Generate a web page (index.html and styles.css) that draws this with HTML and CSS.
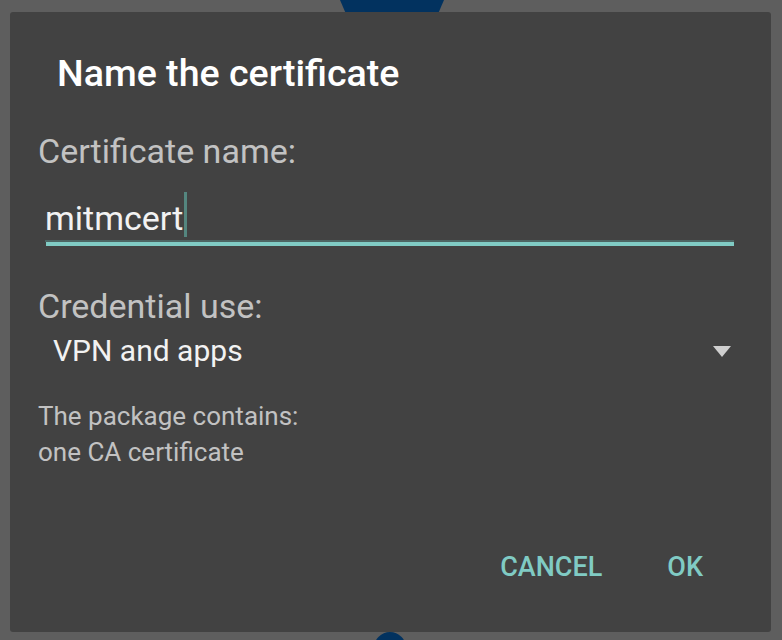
FILE: index.html
```html
<!DOCTYPE html>
<html>
<head>
<meta charset="utf-8">
<link rel="stylesheet" href="styles.css">
</head>
<body>
<div class="bg-tab"></div>
<div class="bg-dot"></div>
<div class="dialog">
  <div class="title">Name the certificate</div>
  <div class="label">Certificate name:</div>
  <div class="field">
    <div class="field-text">mitmcert<span class="cursor"></span></div>
  </div>
  <div class="label label-use">Credential use:</div>
  <div class="select">
    <span class="select-value">VPN and apps</span>
    <span class="caret"></span>
  </div>
  <div class="info">The package contains:<br>one CA certificate</div>
  <div class="actions">
    <span class="btn">CANCEL</span>
    <span class="btn">OK</span>
  </div>
</div>
</body>
</html>
```
FILE: styles.css
```css
html, body {
  margin: 0;
  padding: 0;
}
body {
  background: #5e5e5e;
  font-family: Roboto, "Liberation Sans", sans-serif;
  padding: 12px 11px 8px 10px;
  height: 640px;
  box-sizing: border-box;
  overflow: hidden;
  position: relative;
}
.bg-tab {
  position: absolute;
  left: 340px;
  top: 0;
  width: 104px;
  height: 12px;
  background: #02325f;
  clip-path: polygon(0 0, 100% 0, 95% 100%, 5% 100%);
}
.bg-dot {
  position: absolute;
  left: 374px;
  top: 632px;
  width: 32px;
  height: 32px;
  border-radius: 50%;
  background: #02325f;
}
.dialog {
  position: relative;
  background: #424242;
  border-radius: 3px;
  height: 620px;
  box-sizing: border-box;
  padding: 39px 37px 0 28px;
  display: flex;
  flex-direction: column;
}
.title {
  color: #ffffff;
  font-size: 37.6px;
  font-weight: 500;
  line-height: 44px;
  padding-left: 19px;
}
.label {
  color: #c2c2c2;
  font-size: 34px;
  line-height: 40px;
  margin-top: 36px;
}
.label-use {
  margin-top: 40px;
}
.field {
  margin-top: 25px;
  margin-left: 8px;
  border-bottom: 4px solid #80cbc4;
}
.field-text {
  color: #f2f2f2;
  font-size: 34px;
  line-height: 40px;
  height: 40px;
  padding-top: 2px;
  padding-bottom: 2px;
  margin-left: -1px;
  border-bottom: 2px solid #4d6563;
  display: flex;
  align-items: flex-start;
}
.cursor {
  display: block;
  width: 3px;
  height: 45px;
  background: #54867f;
  margin-left: 1px;
  margin-top: -6px;
}
.select {
  margin-top: 7px;
  display: flex;
  align-items: center;
  justify-content: space-between;
}
.select-value {
  color: #f2f2f2;
  font-size: 30px;
  line-height: 36px;
  padding-left: 15px;
}
.caret {
  width: 0;
  height: 0;
  border-left: 9px solid transparent;
  border-right: 9px solid transparent;
  border-top: 11px solid #cfcfcf;
  margin-right: 3px;
}
.info {
  color: #c2c2c2;
  font-size: 26px;
  line-height: 36px;
  margin-top: 29px;
}
.actions {
  margin-top: 77px;
  display: flex;
  justify-content: flex-end;
  gap: 65px;
  padding-right: 31px;
}
.btn {
  color: #80cbc4;
  font-size: 27px;
  font-weight: 500;
  line-height: 40px;
}
```
